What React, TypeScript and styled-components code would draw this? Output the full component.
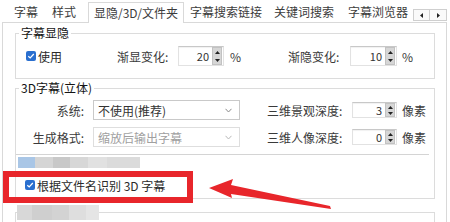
import React from 'react';
import styled, { createGlobalStyle } from 'styled-components';

const GlobalStyle = createGlobalStyle`
  html, body {
    margin: 0;
    padding: 0;
    background: #ffffff;
  }
  body {
    font-family: "Noto Sans CJK SC", "Microsoft YaHei", sans-serif;
    font-size: 12px;
    color: #333333;
  }
`;

const Window = styled.div`
  position: relative;
  width: 450px;
  height: 222px;
  overflow: hidden;
  background: #ffffff;
  display: flex;
  flex-direction: column;
`;

const TabStrip = styled.div`
  position: relative;
  display: flex;
  align-items: flex-end;
  height: 22px;
  flex: 0 0 22px;
  padding-left: 7px;
  box-sizing: border-box;
`;

const Tab = styled.div<{ $active?: boolean; $w: number }>`
  box-sizing: border-box;
  flex: 0 0 ${(p) => p.$w}px;
  width: ${(p) => p.$w}px;
  height: ${(p) => (p.$active ? '21px' : '20px')};
  line-height: 20px;
  text-align: center;
  margin: ${(p) => (p.$active ? '0 0 -1px 5px' : '0')};
  color: #3c3c3c;
  white-space: nowrap;
  background: #ffffff;
  position: relative;
  z-index: 1;
  border: ${(p) => (p.$active ? '1px solid #d9d9d9' : 'none')};
  border-bottom: none;
`;

/* the scroll arrows float over the end of the tab row */
const ScrollButtons = styled.div`
  position: absolute;
  right: 3px;
  top: 9px;
  z-index: 2;
  display: flex;
  height: 12px;
  background: #ffffff;
`;

const ScrollButton = styled.div`
  width: 17px;
  height: 12px;
  box-sizing: border-box;
  border: 1px solid #cfcfcf;
  background: #fafafa;
  display: flex;
  align-items: center;
  justify-content: center;
  & + & {
    border-left: none;
  }
`;

const Panel = styled.div`
  flex: 1;
  margin: 0 3px 0 2px;
  border: 1px solid #d9d9d9;
  border-bottom: none;
  padding: 0 11px 0 12px;
  display: flex;
  flex-direction: column;
  overflow: hidden;
`;

const Group = styled.fieldset<{ $mt: number }>`
  margin: ${(p) => p.$mt}px 0 0 0;
  padding: 0;
  border: 1px solid #dcdcdc;
  min-width: 0;
  flex-shrink: 0;
`;

const Legend = styled.legend`
  margin-left: 3px;
  padding: 0 2px;
  font-size: 12px;
  line-height: 14px;
  color: #141414;
`;

const MosaicLegend = styled.legend`
  margin-left: 1px;
  padding: 0;
  height: 15px;
  display: flex;
`;

const Row = styled.div<{ $mt: number; $h: number; $pl?: number }>`
  display: flex;
  align-items: center;
  height: ${(p) => p.$h}px;
  margin-top: ${(p) => p.$mt}px;
  padding-left: ${(p) => p.$pl ?? 0}px;
`;

const CheckLabel = styled.label<{ $w?: number }>`
  display: flex;
  align-items: center;
  gap: 2px;
  width: ${(p) => (p.$w ? `${p.$w}px` : 'auto')};
  color: #2a2a2a;
  white-space: nowrap;
`;

const CheckBox = styled.span`
  width: 10px;
  height: 10px;
  border-radius: 2px;
  background: #2a6fcf;
  display: flex;
  align-items: center;
  justify-content: center;
  flex-shrink: 0;
`;

const FieldLabel = styled.span<{ $w: number; $right?: boolean; $pl?: number; $pr?: number }>`
  width: ${(p) => p.$w}px;
  box-sizing: border-box;
  text-align: ${(p) => (p.$right ? 'right' : 'left')};
  padding-left: ${(p) => p.$pl ?? 0}px;
  padding-right: ${(p) => p.$pr ?? 0}px;
  color: #3a3a3a;
  white-space: nowrap;
  flex-shrink: 0;
`;

const Unit = styled.span<{ $w?: number; $pl: number }>`
  width: ${(p) => (p.$w ? `${p.$w}px` : 'auto')};
  box-sizing: border-box;
  padding-left: ${(p) => p.$pl}px;
  color: #3a3a3a;
  white-space: nowrap;
  flex-shrink: 0;
`;

const Spin = styled.div<{ $w: number; $h: number }>`
  width: ${(p) => p.$w}px;
  height: ${(p) => p.$h}px;
  box-sizing: border-box;
  display: flex;
  align-items: stretch;
  border: 1px solid #e2e2e2;
  border-top-color: #c8c8c8;
  box-shadow: inset 0 1px 1px rgba(0, 0, 0, 0.06);
  background: #ffffff;
  flex-shrink: 0;
`;

const SpinValue = styled.span`
  flex: 1;
  text-align: right;
  padding-right: 3px;
  display: flex;
  align-items: center;
  justify-content: flex-end;
  color: #333333;
  font-size: 11px;
`;

const SpinButtons = styled.div`
  width: 10px;
  margin: 0 1px 0 0;
  display: flex;
  flex-direction: column;
  background: #d6d6d6;
  border: 1px solid #c2c2c2;
  box-sizing: border-box;
`;

const SpinHalf = styled.div`
  flex: 1;
  display: flex;
  align-items: center;
  justify-content: center;
`;

const Combo = styled.div<{ $w: number; $disabled?: boolean }>`
  width: ${(p) => p.$w}px;
  height: 20px;
  box-sizing: border-box;
  border: 1px solid ${(p) => (p.$disabled ? '#dedede' : '#c9c9c9')};
  background: #ffffff;
  display: flex;
  align-items: center;
  padding: 0 7px 0 4px;
  color: ${(p) => (p.$disabled ? '#a0a0a0' : '#333333')};
  flex-shrink: 0;
`;

const ComboText = styled.span`
  flex: 1;
  white-space: nowrap;
`;

const Separator = styled.div`
  height: 1px;
  background: #d4d4d4;
  margin: 7px 5px 0 0;
`;

const Mosaic = styled.div<{ $mt: number; $ml: number; $h: number }>`
  display: flex;
  margin-top: ${(p) => p.$mt}px;
  margin-left: ${(p) => p.$ml}px;
  height: ${(p) => p.$h}px;
`;

const MosaicTile = styled.span<{ $w: number; $c: string }>`
  width: ${(p) => p.$w}px;
  height: 100%;
  background: ${(p) => p.$c};
`;

const Highlight = styled.div`
  position: absolute;
  left: 3px;
  top: 171px;
  width: 190px;
  height: 32px;
  box-sizing: border-box;
  border: 6px solid #e8262b;
  pointer-events: none;
`;

const ArrowSvg = styled.svg`
  position: absolute;
  left: 0;
  top: 0;
  pointer-events: none;
`;

function Check() {
  return (
    <CheckBox>
      <svg width="8" height="8" viewBox="0 0 8 8">
        <path d="M1.3 4.2 L3.2 6 L6.8 2" fill="none" stroke="#ffffff" strokeWidth="1.2" />
      </svg>
    </CheckBox>
  );
}

function SpinBox({ value, w, h }: { value: string; w: number; h: number }) {
  return (
    <Spin $w={w} $h={h}>
      <SpinValue>{value}</SpinValue>
      <SpinButtons>
        <SpinHalf>
          <svg width="5" height="3" viewBox="0 0 5 3">
            <path d="M0 3 L2.5 0 L5 3 Z" fill="#222" />
          </svg>
        </SpinHalf>
        <SpinHalf>
          <svg width="5" height="3" viewBox="0 0 5 3">
            <path d="M0 0 L2.5 3 L5 0 Z" fill="#222" />
          </svg>
        </SpinHalf>
      </SpinButtons>
    </Spin>
  );
}

function ComboBox({ text, w, disabled }: { text: string; w: number; disabled?: boolean }) {
  return (
    <Combo $w={w} $disabled={disabled}>
      <ComboText>{text}</ComboText>
      <svg width="7" height="5" viewBox="0 0 7 5">
        <path d="M0.5 0.8 L3.5 4 L6.5 0.8" fill="none" stroke={disabled ? '#b8b8b8' : '#8a8a8a'} strokeWidth="1" />
      </svg>
    </Combo>
  );
}

const tabs = [
  { label: '字幕', w: 38 },
  { label: '样式', w: 38 },
  { label: '显隐/3D/文件夹', w: 96, active: true },
  { label: '字幕搜索链接', w: 84 },
  { label: '关键词搜索', w: 72 },
  { label: '字幕浏览器', w: 76 },
];

const topMosaic = [
  { w: 17, c: '#a9c6e6' },
  { w: 18, c: '#d5d5d5' },
  { w: 17, c: '#c8c8c8' },
  { w: 18, c: '#d7d7d7' },
  { w: 19, c: '#e1e1e1' },
  { w: 33, c: '#dbdbdb' },
];

const bottomMosaic = [
  { w: 15, c: '#d8d8d8' },
  { w: 20, c: '#cfcfcf' },
  { w: 17, c: '#d3d3d3' },
  { w: 17, c: '#dedede' },
  { w: 13, c: '#e5e5e5' },
];

export default function App() {
  return (
    <>
      <GlobalStyle />
      <Window>
        <TabStrip>
          {tabs.map((t) => (
            <Tab key={t.label} $w={t.w} $active={t.active}>
              {t.label}
            </Tab>
          ))}
          <ScrollButtons>
            <ScrollButton>
              <svg width="3" height="5" viewBox="0 0 3 5">
                <path d="M3 0 L0 2.5 L3 5 Z" fill="#222" />
              </svg>
            </ScrollButton>
            <ScrollButton>
              <svg width="3" height="5" viewBox="0 0 3 5">
                <path d="M0 0 L3 2.5 L0 5 Z" fill="#222" />
              </svg>
            </ScrollButton>
          </ScrollButtons>
        </TabStrip>

        <Panel>
          <Group $mt={3}>
            <Legend>字幕显隐</Legend>
            <Row $mt={6} $h={20} $pl={10}>
              <CheckLabel $w={91}>
                <Check />
                使用
              </CheckLabel>
              <FieldLabel $w={61}>渐显变化:</FieldLabel>
              <SpinBox value="20" w={46} h={20} />
              <Unit $w={64} $pl={6}>%</Unit>
              <FieldLabel $w={62}>渐隐变化:</FieldLabel>
              <SpinBox value="10" w={47} h={20} />
              <Unit $pl={5}>%</Unit>
            </Row>
            <Row $mt={0} $h={12} />
          </Group>

          <Group $mt={2}>
            <Legend>3D字幕(立体)</Legend>
            <Row $mt={5} $h={20}>
              <FieldLabel $w={77} $right $pr={9}>系统:</FieldLabel>
              <ComboBox text="不使用(推荐)" w={147} />
              <FieldLabel $w={112} $pl={27}>三维景观深度:</FieldLabel>
              <SpinBox value="3" w={45} h={16} />
              <Unit $pl={5}>像素</Unit>
            </Row>
            <Row $mt={7} $h={20}>
              <FieldLabel $w={77} $right $pr={9}>生成格式:</FieldLabel>
              <ComboBox text="缩放后输出字幕" w={147} disabled />
              <FieldLabel $w={112} $pl={27}>三维人像深度:</FieldLabel>
              <SpinBox value="0" w={45} h={16} />
              <Unit $pl={5}>像素</Unit>
            </Row>
            <Separator />
            <Mosaic $mt={2} $ml={2} $h={11}>
              {topMosaic.map((m, i) => (
                <MosaicTile key={i} $w={m.w} $c={m.c} />
              ))}
            </Mosaic>
            <Row $mt={9} $h={16} $pl={9}>
              <CheckLabel>
                <Check />
                根据文件名识别 3D 字幕
              </CheckLabel>
            </Row>
            <Row $mt={0} $h={5} />
          </Group>

          <Group $mt={6}>
            <MosaicLegend>
              {bottomMosaic.map((m, i) => (
                <MosaicTile key={i} $w={m.w} $c={m.c} />
              ))}
            </MosaicLegend>
            <Row $mt={0} $h={20} />
          </Group>
        </Panel>

        <Highlight />
        <ArrowSvg width="450" height="222" viewBox="0 0 450 222">
          <polygon
            points="209,188 233,179 231,185 330,206 331,209 231,194 232,198"
            fill="#e8262b"
          />
        </ArrowSvg>
      </Window>
    </>
  );
}
